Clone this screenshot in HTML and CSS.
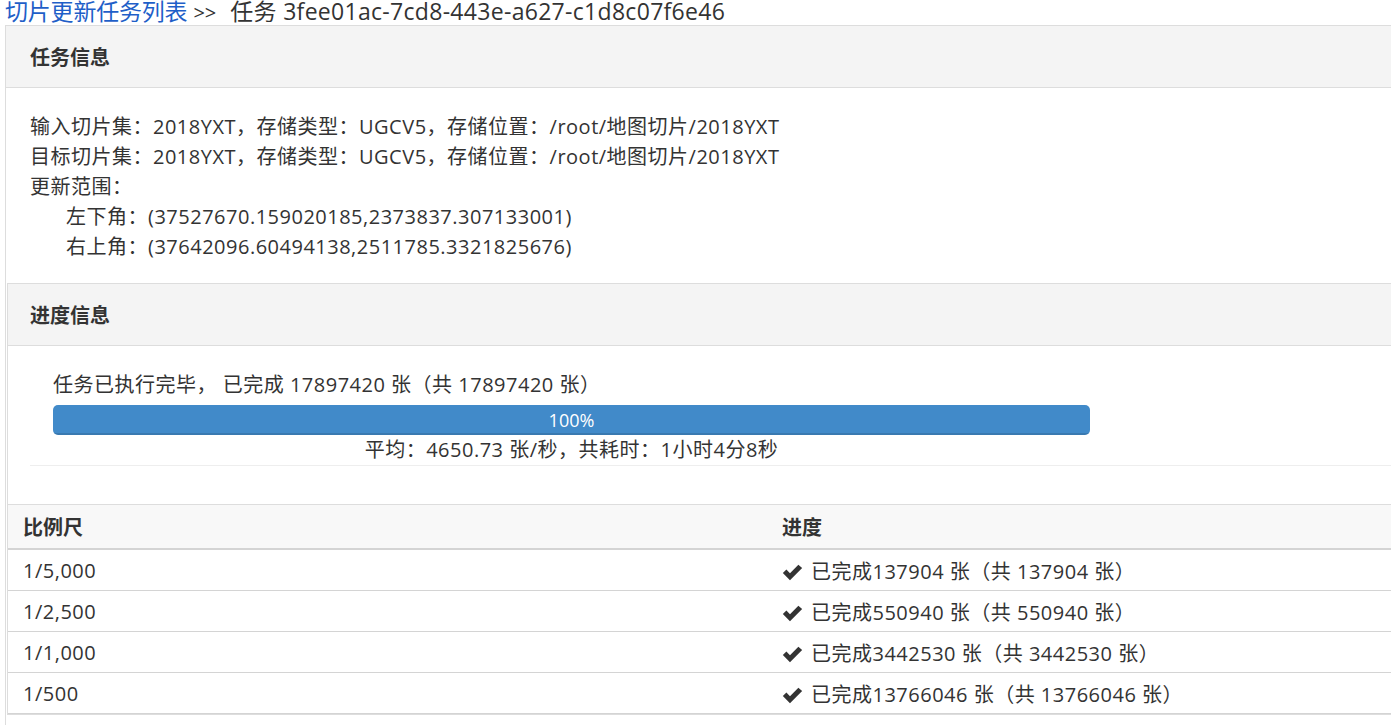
FILE: index.html
```html
<!DOCTYPE html>
<html lang="zh-CN">
<head>
<meta charset="utf-8">
<title>任务</title>
<link rel="stylesheet" href="styles.css">
</head>
<body>
<div class="page">
  <div class="crumb"><a class="crumb-link" href="#">切片更新任务列表</a><span class="crumb-sep">&gt;&gt;</span><span class="crumb-cur">任务 3fee01ac-7cd8-443e-a627-c1d8c07f6e46</span></div>
  <div class="panel outer">
    <div class="panel-heading">任务信息</div>
    <div class="info">
      <div class="line">输入切片集：2018YXT，存储类型：UGCV5，存储位置：/root/地图切片/2018YXT</div>
      <div class="line">目标切片集：2018YXT，存储类型：UGCV5，存储位置：/root/地图切片/2018YXT</div>
      <div class="line">更新范围：</div>
      <div class="line indent">左下角：(37527670.159020185,2373837.307133001)</div>
      <div class="line indent">右上角：(37642096.60494138,2511785.3321825676)</div>
    </div>
    <div class="panel inner">
      <div class="panel-heading">进度信息</div>
      <div class="progress-body">
        <div class="progress-wrap">
          <div class="line">任务已执行完毕， 已完成 17897420 张（共 17897420 张）</div>
          <div class="progress"><div class="progress-bar">100%</div></div>
          <div class="stats">平均：4650.73 张/秒，共耗时：1小时4分8秒</div>
        </div>
        <div class="rule"></div>
      </div>
      <table class="levels">
        <thead>
          <tr><th class="col-scale">比例尺</th><th>进度</th></tr>
        </thead>
        <tbody>
          <tr><td>1/5,000</td><td><svg class="check" viewBox="0 0 20 16"><path d="M0.8 8.4 L4.2 5.2 L7.6 8.6 L15.6 0.6 L19.2 3.8 L7.6 15.4 Z"/></svg>已完成137904 张（共 137904 张）</td></tr>
          <tr><td>1/2,500</td><td><svg class="check" viewBox="0 0 20 16"><path d="M0.8 8.4 L4.2 5.2 L7.6 8.6 L15.6 0.6 L19.2 3.8 L7.6 15.4 Z"/></svg>已完成550940 张（共 550940 张）</td></tr>
          <tr><td>1/1,000</td><td><svg class="check" viewBox="0 0 20 16"><path d="M0.8 8.4 L4.2 5.2 L7.6 8.6 L15.6 0.6 L19.2 3.8 L7.6 15.4 Z"/></svg>已完成3442530 张（共 3442530 张）</td></tr>
          <tr><td>1/500</td><td><svg class="check" viewBox="0 0 20 16"><path d="M0.8 8.4 L4.2 5.2 L7.6 8.6 L15.6 0.6 L19.2 3.8 L7.6 15.4 Z"/></svg>已完成13766046 张（共 13766046 张）</td></tr>
        </tbody>
      </table>
    </div>
  </div>
</div>
</body>
</html>
```

FILE: styles.css
```css
html, body {
  margin: 0;
  padding: 0;
  overflow: hidden;
  background: #fff;
}
body {
  font-family: "Open Sans", "Noto Sans CJK SC", sans-serif;
  font-size: 20px;
  color: #333;
}
.page {
  width: 1420px;
}
.crumb {
  height: 25px;
  line-height: 23px;
  font-size: 23px;
  padding-left: 5px;
  white-space: nowrap;
}
.crumb-link {
  color: #1f5fc8;
  text-decoration: none;
  letter-spacing: -0.2px;
}
.crumb-sep {
  font-size: 20px;
  margin: 0 14px 0 6px;
  color: #333;
}
.crumb-cur {
  color: #333;
  letter-spacing: 0.3px;
}
.panel {
  border: 1px solid #ddd;
  background: #fff;
}
.outer {
  margin-left: 5px;
  border-right: none;
  padding-bottom: 40px;
}
.panel-heading {
  background: #f4f4f4;
  border-bottom: 1px solid #ddd;
  padding: 18px 24px 16px;
  line-height: 27px;
  font-weight: 700;
  font-size: 20px;
}
.info {
  padding: 24px 24px 21px;
}
.line {
  line-height: 30px;
  white-space: nowrap;
  letter-spacing: 0.5px;
}
.indent {
  padding-left: 36px;
}
.inner {
  margin-left: 1px;
  border-right: none;
}
.inner .panel-heading {
  padding-left: 22px;
}
.progress-body {
  padding: 24px 0 0 22px;
}
.progress-wrap {
  margin-left: 23px;
  width: 1037px;
}
.progress {
  margin-top: 5px;
  height: 30px;
  background: #f5f5f5;
  border-radius: 5px;
  overflow: hidden;
}
.progress-bar {
  width: 100%;
  height: 30px;
  background: #418ac9;
  box-shadow: inset 0 -2px 0 rgba(0, 0, 0, 0.12);
  color: #fff;
  text-align: center;
  line-height: 30px;
  font-size: 18px;
}
.stats {
  text-align: center;
  line-height: 30px;
  white-space: nowrap;
  letter-spacing: 0.5px;
}
.rule {
  border-top: 1px solid #eee;
  margin-bottom: 38px;
}
.levels {
  width: 100%;
  border-collapse: collapse;
}
.levels th, .levels td {
  text-align: left;
  padding: 0 15px;
  white-space: nowrap;
}
.levels th {
  background: #f8f8f8;
  border-top: 1px solid #ddd;
  border-bottom: 2px solid #d4d4d4;
  height: 43px;
  font-weight: 700;
}
.levels td {
  height: 40px;
  border-bottom: 1px solid #d4d4d4;
  letter-spacing: 0.5px;
}
.col-scale {
  width: 729px;
}
.check {
  width: 21px;
  height: 17px;
  fill: #333;
  margin-right: 8px;
  vertical-align: -2px;
}
```
